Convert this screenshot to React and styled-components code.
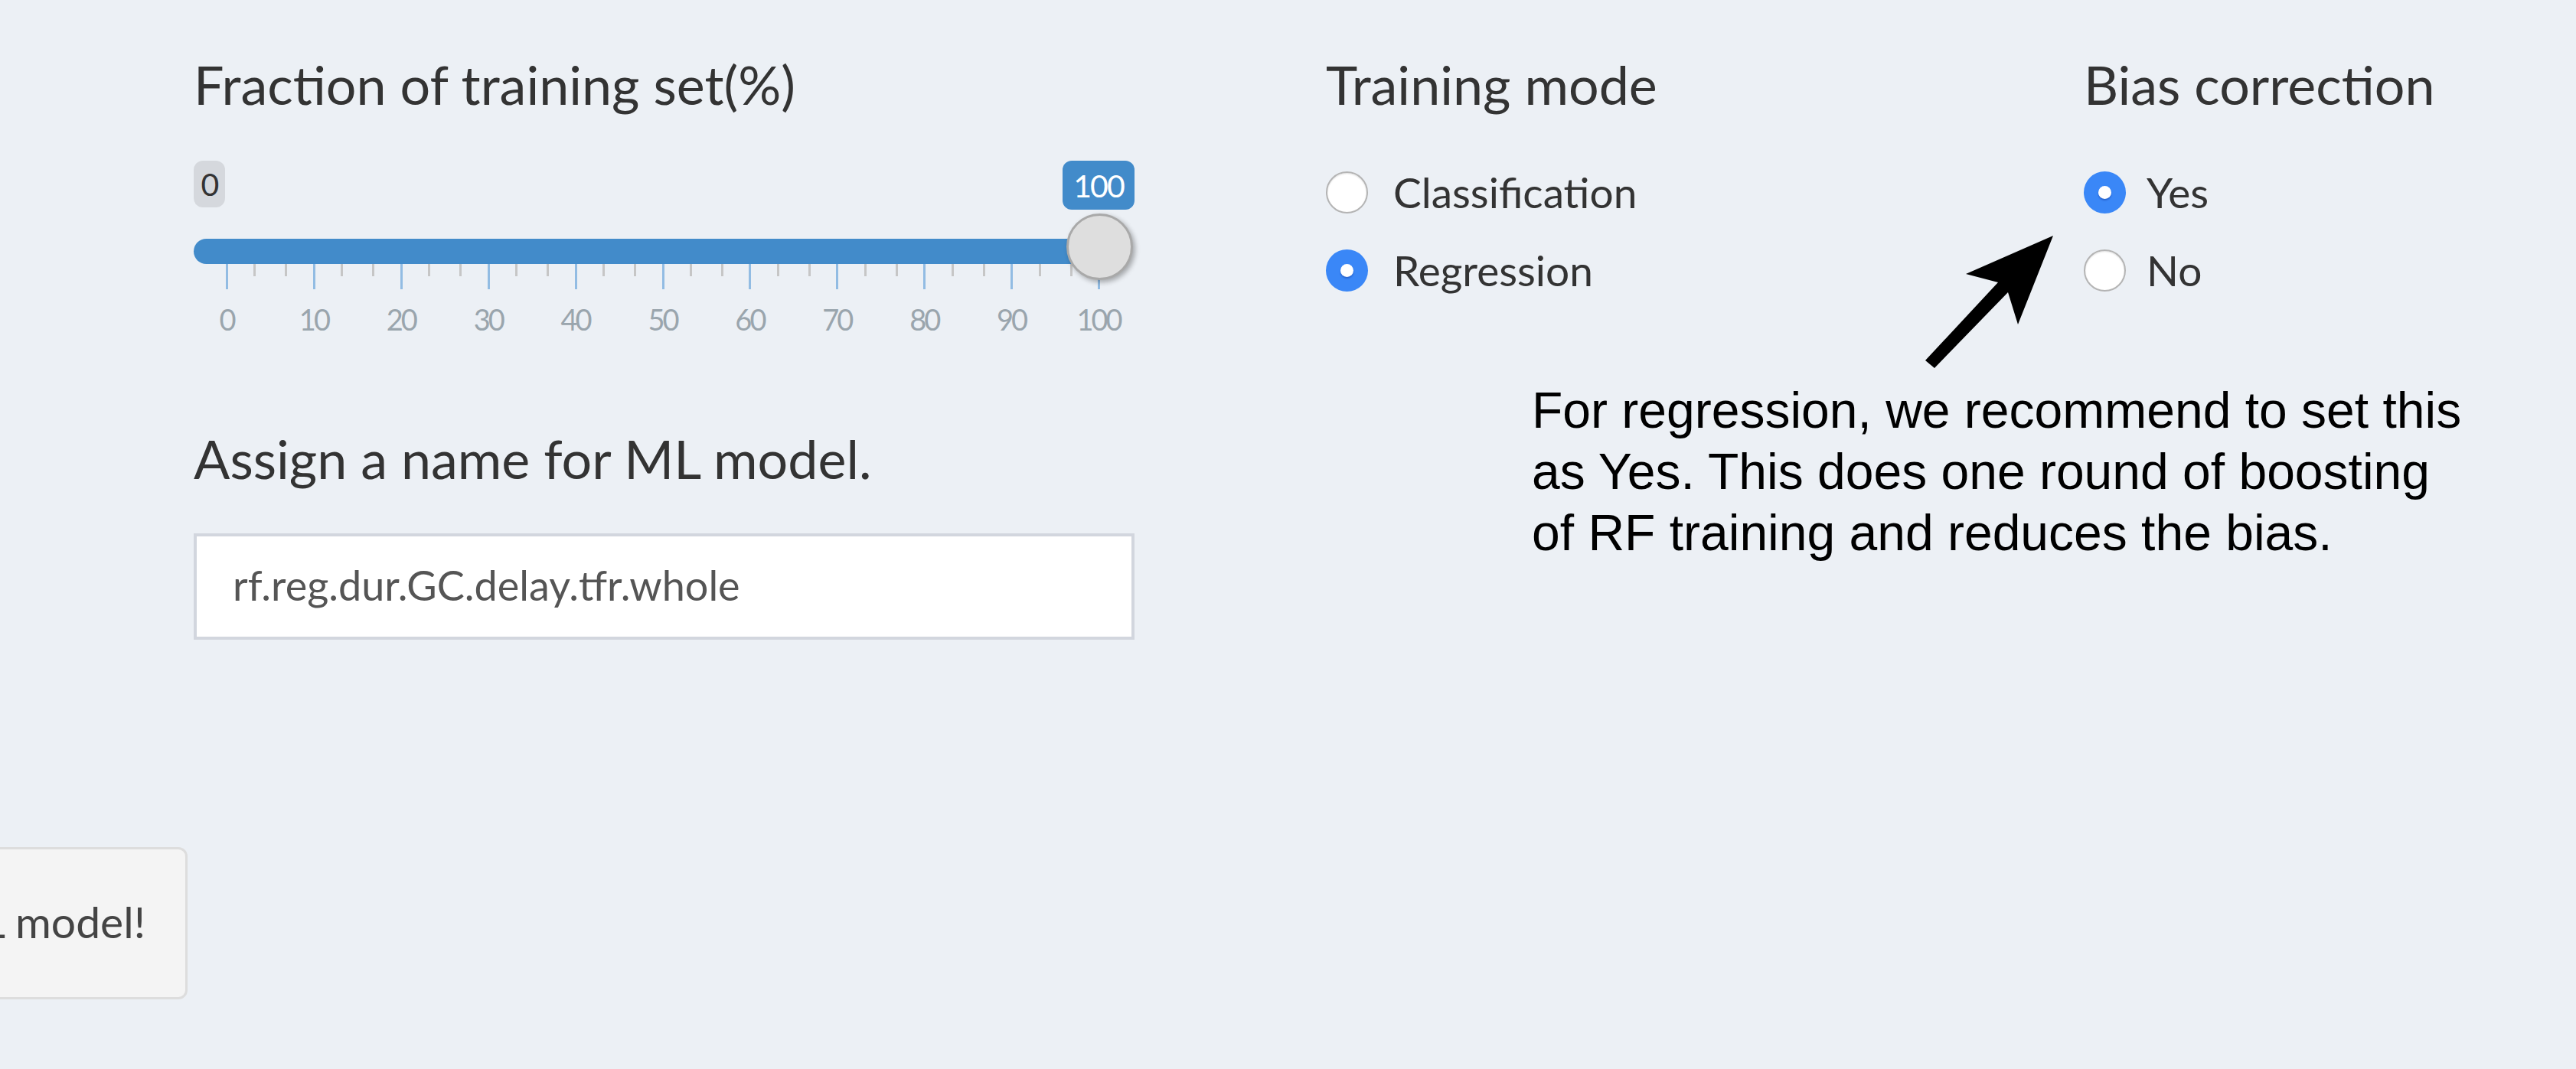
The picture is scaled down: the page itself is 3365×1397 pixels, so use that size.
import React from "react";
import styled, { createGlobalStyle } from "styled-components";

const GlobalStyle = createGlobalStyle`
  html, body {
    margin: 0;
    padding: 0;
    background: #ecf0f5;
  }
  body {
    overflow: hidden;
  }
`;

// slider grid: first major tick sits 43px into the slider, 113.9px per 10 units
const TICK_START = 43;
const TICK_STEP = 113.9;
const majors = [0, 10, 20, 30, 40, 50, 60, 70, 80, 90, 100];
const minors = majors.slice(0, -1).flatMap((_, i) => [i + 0.32, i + 0.68]);
const tickX = (step) => TICK_START + step * TICK_STEP;

const App = () => {
  return (
    <Page>
      <GlobalStyle />
      <TopRow>
        <LeftCol>
          <FieldLabel>Fraction of training set(%)</FieldLabel>
          <SliderWrap>
            <ValuePill>0</ValuePill>
            <ValuePill $max>100</ValuePill>
            <Track />
            {minors.map((s) => (
              <Tick key={"m" + s} style={{ left: tickX(s) }} />
            ))}
            {majors.map((v, i) => (
              <Tick key={"M" + v} $major style={{ left: tickX(i) }} />
            ))}
            {majors.map((v, i) => (
              <TickLabel key={"L" + v} style={{ left: tickX(i) }}>
                {v}
              </TickLabel>
            ))}
            <Handle />
          </SliderWrap>

          <NameLabel>Assign a name for ML model.</NameLabel>
          <NameInput defaultValue="rf.reg.dur.GC.delay.tfr.whole" readOnly />
        </LeftCol>

        <RightPane>
          <RadioGroups>
            <RadioGroup>
              <FieldLabel>Training mode</FieldLabel>
              <Options>
                <RadioOption>
                  <RadioDot />
                  <span>Classification</span>
                </RadioOption>
                <RadioOption>
                  <RadioDot $checked />
                  <span>Regression</span>
                </RadioOption>
              </Options>
            </RadioGroup>
            <RadioGroup>
              <FieldLabel>Bias correction</FieldLabel>
              <Options>
                <RadioOption $tight>
                  <RadioDot $checked />
                  <span>Yes</span>
                </RadioOption>
                <RadioOption $tight>
                  <RadioDot />
                  <span>No</span>
                </RadioOption>
              </Options>
            </RadioGroup>
          </RadioGroups>
          <Note>
            For regression, we recommend to set this
            <br />
            as Yes. This does one round of boosting
            <br />
            of RF training and reduces the bias.
          </Note>
        </RightPane>
      </TopRow>

      <ButtonRow>
        <ActionButton>Train ML model!</ActionButton>
      </ButtonRow>

      <ArrowMark viewBox="0 0 200 200">
        <polygon points="182,8 68,58 110,69 15,171 27,181 123,82 136,124" fill="#000" />
      </ArrowMark>
    </Page>
  );
};

export default App;

const Page = styled.div`
  position: relative;
  width: 3365px;
  height: 1397px;
  overflow: hidden;
  box-sizing: border-box;
  padding-top: 70px;
  background: #ecf0f5;
  font-family: Lato, "Open Sans", sans-serif;
  color: #333;
`;

const TopRow = styled.div`
  display: flex;
  padding-left: 253px;
  gap: 250px;
`;

const LeftCol = styled.div`
  display: flex;
  flex-direction: column;
  width: 1229px;
`;

const FieldLabel = styled.div`
  font-size: 70px;
  line-height: 80px;
  color: #333;
  white-space: nowrap;
`;

const NameLabel = styled(FieldLabel)`
  margin-top: 119px;
`;

const SliderWrap = styled.div`
  position: relative;
  height: 230px;
  margin-top: 60px;
`;

const ValuePill = styled.div`
  position: absolute;
  top: 0;
  left: ${(props) => (props.$max ? "1135px" : "0")};
  width: ${(props) => (props.$max ? "94px" : "41px")};
  height: ${(props) => (props.$max ? "64px" : "61px")};
  display: flex;
  align-items: center;
  justify-content: center;
  border-radius: 12px;
  background: ${(props) => (props.$max ? "#428bca" : "#d5d8dd")};
  color: ${(props) => (props.$max ? "#fff" : "#333")};
  font-size: 41px;
  letter-spacing: -2px;
`;

const Track = styled.div`
  position: absolute;
  top: 102px;
  left: 0;
  width: 1190px;
  height: 33px;
  border-radius: 17px 0 0 17px;
  background: #428bca;
`;

const Tick = styled.div`
  position: absolute;
  top: 135px;
  width: 3px;
  margin-left: -1px;
  height: ${(props) => (props.$major ? "33px" : "16px")};
  background: ${(props) => (props.$major ? "#92bce3" : "#c6c6c6")};
`;

const TickLabel = styled.div`
  position: absolute;
  top: 188px;
  transform: translateX(-50%);
  font-size: 38px;
  line-height: 38px;
  letter-spacing: -3px;
  color: #9aa5ad;
`;

const Handle = styled.div`
  position: absolute;
  top: 69px;
  left: 1140px;
  width: 87px;
  height: 87px;
  box-sizing: border-box;
  border-radius: 50%;
  border: 3px solid #a9a9a9;
  background: #dedede;
  box-shadow: 3px 3px 6px rgba(0, 0, 0, 0.3);
`;

const NameInput = styled.input`
  margin-top: 58px;
  width: 100%;
  height: 139px;
  box-sizing: border-box;
  padding: 0 47px 5px;
  border: 4px solid #d2d6de;
  border-radius: 0;
  background: #fff;
  outline: none;
  font-family: Lato, "Open Sans", sans-serif;
  font-size: 54px;
  color: #555;
`;

const RightPane = styled.div`
  display: flex;
  flex-direction: column;
`;

const RadioGroups = styled.div`
  display: grid;
  grid-template-columns: 740px auto;
  column-gap: 250px;
`;

const RadioGroup = styled.div`
  display: flex;
  flex-direction: column;
`;

const Options = styled.div`
  margin-top: 50px;
  display: flex;
  flex-direction: column;
`;

const RadioOption = styled.div`
  display: flex;
  align-items: center;
  height: 102px;
  gap: ${(props) => (props.$tight ? "27px" : "33px")};
  font-size: 55px;
  color: #333;
`;

const RadioDot = styled.span`
  position: relative;
  flex-shrink: 0;
  width: 55px;
  height: 55px;
  box-sizing: border-box;
  border-radius: 50%;
  border: ${(props) => (props.$checked ? "none" : "2px solid #b4b4b4")};
  background: ${(props) => (props.$checked ? "#3a87f7" : "#fff")};
  box-shadow: ${(props) => (props.$checked ? "none" : "inset 0 1px 2px rgba(0, 0, 0, 0.12)")};

  &::after {
    content: "";
    display: ${(props) => (props.$checked ? "block" : "none")};
    position: absolute;
    top: 19px;
    left: 19px;
    width: 17px;
    height: 17px;
    border-radius: 50%;
    background: #fff;
    box-shadow: 0 2px 2px rgba(20, 60, 160, 0.45);
  }
`;

const Note = styled.div`
  margin-top: 92px;
  margin-left: 269px;
  font-family: "Liberation Sans", Arial, sans-serif;
  font-size: 66px;
  line-height: 80px;
  color: #000;
  white-space: nowrap;
`;

const ButtonRow = styled.div`
  margin-top: 271px;
  width: 245px;
  display: flex;
  justify-content: flex-end;
`;

const ActionButton = styled.button`
  flex-shrink: 0;
  height: 199px;
  padding: 0 52px 6px 60px;
  border: 3px solid #ddd;
  border-radius: 12px;
  background: #f4f4f4;
  color: #444;
  font-family: Lato, "Open Sans", sans-serif;
  font-size: 57px;
  white-space: nowrap;
`;

const ArrowMark = styled.svg`
  position: absolute;
  left: 2500px;
  top: 300px;
  width: 200px;
  height: 200px;
`;
